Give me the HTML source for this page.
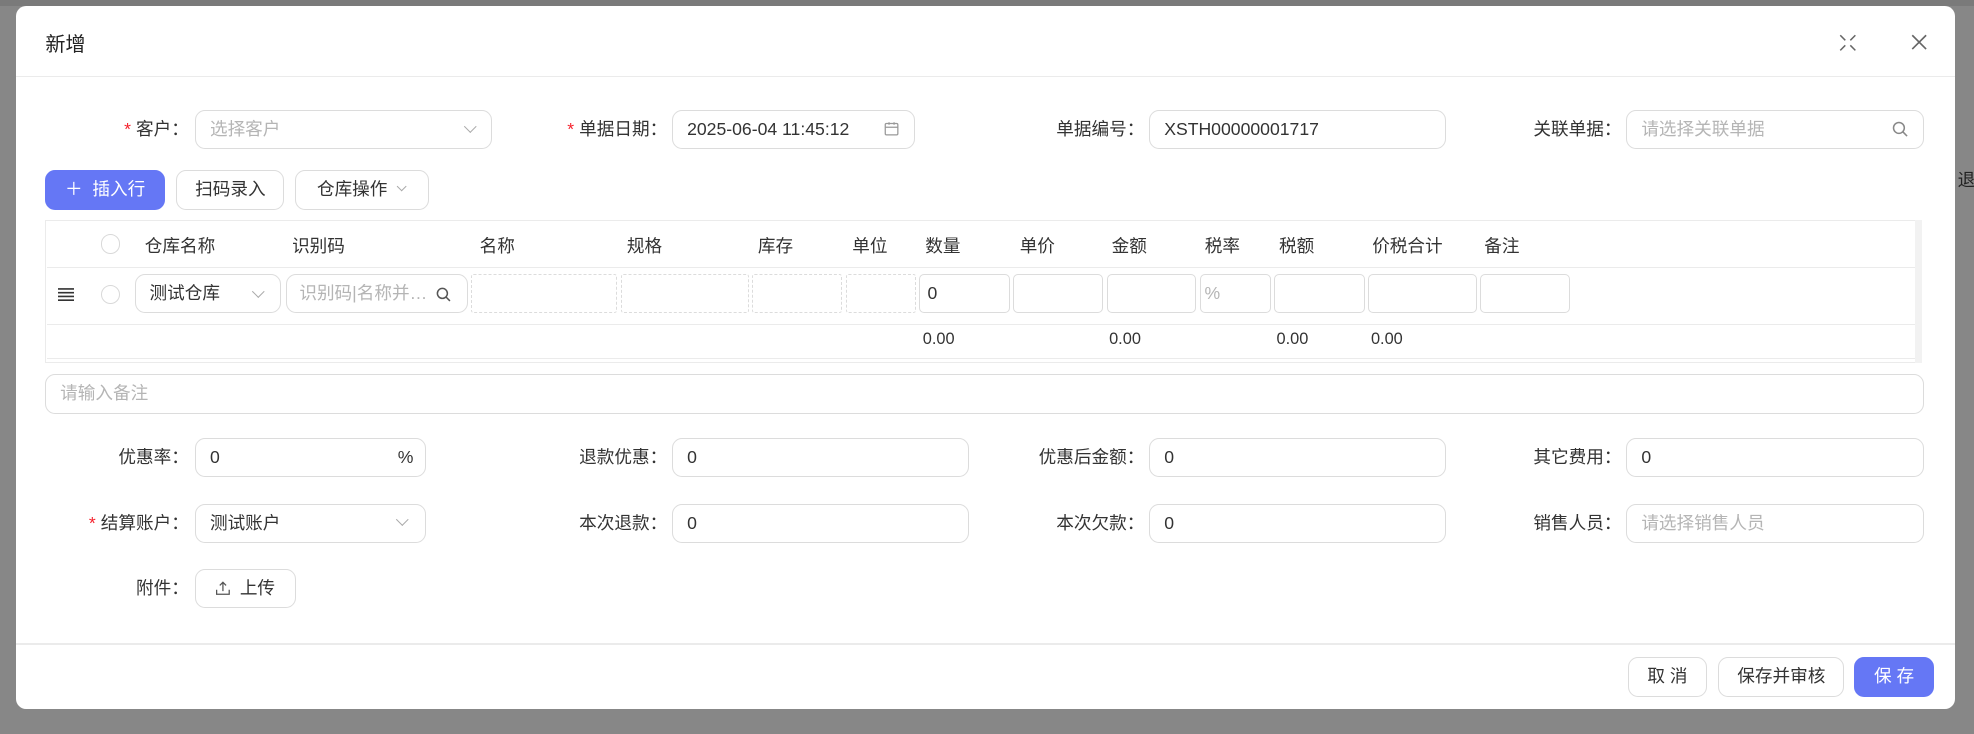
<!DOCTYPE html>
<html><head><meta charset="utf-8"><style>
html{zoom:1.2589}
body{margin:0;width:1568px;height:583px;background:#878787;font-family:"Liberation Sans","Noto Sans CJK SC",sans-serif;font-size:14px;color:#333;position:relative;overflow:hidden}
.a{position:absolute}
.modal{left:13px;top:5px;width:1540px;height:558px;background:#fff;border-radius:8px}
.inp{position:absolute;box-sizing:border-box;border:1px solid #dcdcdc;border-radius:8px;height:31px;line-height:29px;padding-left:11px;background:#fff;font-size:14px}
.ph{color:#b5b5b5}
.lbl{position:absolute;text-align:right;width:140px;line-height:31px;font-size:14px;color:#333}
.req{color:#f5222d;margin-right:4px}
.btn{position:absolute;box-sizing:border-box;border:1px solid #dcdcdc;border-radius:8px;height:32px;line-height:30px;text-align:center;background:#fff;font-size:14px}
.th{position:absolute;top:185px;font-size:14px}
.cell{position:absolute;top:218px;height:31px;box-sizing:border-box;border:1px solid #dcdcdc;border-radius:4px;line-height:29px;padding-left:6px}
.dash{border:1px dashed #dcdcdc;border-radius:2px}
.circ{position:absolute;width:14px;height:14px;border:1px solid #d9d9d9;border-radius:50%}
.chev{position:absolute;width:6px;height:6px;border-right:1px solid #aaa;border-bottom:1px solid #aaa;transform:rotate(45deg)}
.tot{position:absolute;top:262px;font-size:13px}
</style></head><body>
<div class="a" style="left:0;top:0;width:1568px;height:5px;background:#7a7a7a"></div>
<div class="a" style="left:1555px;top:133px;font-size:14px;color:#222">退</div>
<div class="a modal"></div>
<div class="a" style="left:36px;top:22px;font-size:16px;color:#222">新增</div>
<svg class="a" style="left:1461px;top:27px" width="14" height="14" viewBox="0 0 14 14" fill="none" stroke="#666" stroke-width="1.2"><path d="M1 1l4 4M13 1l-4 4M1 13l4-4M13 13l-4-4"/></svg>
<svg class="a" style="left:1518px;top:27px" width="13" height="13" viewBox="0 0 13 13" stroke="#666" stroke-width="1.3"><path d="M1 1l11 11M12 1L1 12"/></svg>
<div class="a" style="left:13px;top:60px;width:1540px;height:1px;background:#ebebeb"></div>

<div class="lbl" style="left:10px;top:87px"><span class="req">*</span>客户：</div>
<div class="inp ph" style="left:155px;top:87px;width:236px">选择客户</div><div class="chev" style="left:370px;top:97px"></div>
<div class="lbl" style="left:390px;top:87px"><span class="req">*</span>单据日期：</div>
<div class="inp" style="left:534px;top:87px;width:193px">2025-06-04 11:45:12</div>
<svg class="a" style="left:702px;top:96px" width="12" height="12" viewBox="0 0 12 12" fill="none" stroke="#999"><rect x="1" y="2" width="10" height="9" rx="1"/><path d="M1 5h10M4 1v2M8 1v2"/></svg>
<div class="lbl" style="left:769px;top:87px">单据编号：</div>
<div class="inp" style="left:913px;top:87px;width:236px">XSTH00000001717</div>
<div class="lbl" style="left:1148px;top:87px">关联单据：</div>
<div class="inp ph" style="left:1292px;top:87px;width:236px">请选择关联单据</div>
<svg class="a" style="left:1503px;top:96px" width="13" height="13" viewBox="0 0 13 13" fill="none" stroke="#888" stroke-width="1.2"><circle cx="5.5" cy="5.5" r="4.3"/><path d="M8.7 8.7l3.3 3.3"/></svg>

<div class="btn" style="left:36px;top:135px;width:95px;background:#6577f5;border-color:#6577f5;color:#fff">＋&nbsp; 插入行</div>
<div class="btn" style="left:140px;top:135px;width:86px">扫码录入</div>
<div class="btn" style="left:234px;top:135px;width:107px;text-align:left;padding-left:17px">仓库操作</div><div class="chev" style="left:316px;top:145px;width:5px;height:5px"></div>

<div class="a" style="left:36px;top:175px;width:1491px;height:113px;border:1px solid #ebebeb;box-sizing:border-box"></div>
<div class="a" style="left:1521px;top:175px;width:6px;height:113px;background:#f2f2f2"></div>
<div class="a" style="left:37px;top:212px;width:1484px;height:1px;background:#ebebeb"></div>
<div class="a" style="left:37px;top:257px;width:1484px;height:1px;background:#ebebeb"></div>
<div class="a" style="left:37px;top:284px;width:1484px;height:1px;background:#ebebeb"></div>
<div class="circ" style="left:80px;top:186px"></div>
<div class="th" style="left:115px">仓库名称</div><div class="th" style="left:232px">识别码</div><div class="th" style="left:381px">名称</div><div class="th" style="left:498px">规格</div><div class="th" style="left:602px">库存</div><div class="th" style="left:677px">单位</div><div class="th" style="left:735px">数量</div><div class="th" style="left:810px">单价</div><div class="th" style="left:883px">金额</div><div class="th" style="left:957px">税率</div><div class="th" style="left:1016px">税额</div><div class="th" style="left:1090px">价税合计</div><div class="th" style="left:1179px">备注</div>

<svg class="a" style="left:46px;top:228px" width="13" height="12" viewBox="0 0 13 12" stroke="#333" stroke-width="1.3"><path d="M0 1.5h13M0 4.5h13M0 7.5h13M0 10.5h13"/></svg>
<div class="circ" style="left:80px;top:226px"></div>
<div class="cell" style="left:107px;width:116px;border-radius:8px;padding-left:11px">测试仓库</div><div class="chev" style="left:202px;top:228px"></div>
<div class="cell ph" style="left:227px;width:145px;border-radius:8px;padding-left:10px">识别码|名称并…</div>
<svg class="a" style="left:346px;top:228px" width="12" height="12" viewBox="0 0 13 13" fill="none" stroke="#555" stroke-width="1.3"><circle cx="5.5" cy="5.5" r="4.3"/><path d="M8.7 8.7l3.3 3.3"/></svg>
<div class="cell dash" style="left:374px;width:116px"></div>
<div class="cell dash" style="left:493px;width:102px"></div>
<div class="cell dash" style="left:597px;width:72px"></div>
<div class="cell dash" style="left:672px;width:56px"></div>
<div class="cell" style="left:730px;width:72px">0</div>
<div class="cell" style="left:805px;width:71px"></div>
<div class="cell" style="left:879px;width:71px"></div>
<div class="cell ph" style="left:953px;width:57px;padding-left:3px">%</div>
<div class="cell" style="left:1012px;width:72px"></div>
<div class="cell" style="left:1087px;width:86px"></div>
<div class="cell" style="left:1176px;width:71px"></div>
<div class="tot" style="left:733px">0.00</div><div class="tot" style="left:881px">0.00</div><div class="tot" style="left:1014px">0.00</div><div class="tot" style="left:1089px">0.00</div>

<div class="inp ph" style="left:36px;top:297px;width:1492px;height:32px;line-height:30px">请输入备注</div>

<div class="lbl" style="left:10px;top:348px">优惠率：</div>
<div class="inp" style="left:155px;top:348px;width:183px">0</div><div class="a" style="left:316px;top:355px">%</div>
<div class="lbl" style="left:390px;top:348px">退款优惠：</div>
<div class="inp" style="left:534px;top:348px;width:236px">0</div>
<div class="lbl" style="left:769px;top:348px">优惠后金额：</div>
<div class="inp" style="left:913px;top:348px;width:236px">0</div>
<div class="lbl" style="left:1148px;top:348px">其它费用：</div>
<div class="inp" style="left:1292px;top:348px;width:236px">0</div>

<div class="lbl" style="left:10px;top:400px"><span class="req">*</span>结算账户：</div>
<div class="inp" style="left:155px;top:400px;width:183px">测试账户</div><div class="chev" style="left:316px;top:409px"></div>
<div class="lbl" style="left:390px;top:400px">本次退款：</div>
<div class="inp" style="left:534px;top:400px;width:236px">0</div>
<div class="lbl" style="left:769px;top:400px">本次欠款：</div>
<div class="inp" style="left:913px;top:400px;width:236px">0</div>
<div class="lbl" style="left:1148px;top:400px">销售人员：</div>
<div class="inp ph" style="left:1292px;top:400px;width:236px">请选择销售人员</div>

<div class="lbl" style="left:10px;top:452px">附件：</div>
<div class="btn" style="left:155px;top:452px;width:80px;height:31px">
<svg style="vertical-align:-1px;margin-right:8px" width="11" height="11" viewBox="0 0 11 11" fill="none" stroke="#555"><path d="M5.5 8V1M3 3.5l2.5-2.5L8 3.5M.5 7v3.5h10V7"/></svg>上传</div>

<div class="a" style="left:13px;top:511px;width:1540px;height:1px;background:#ebebeb"></div>
<div class="btn" style="left:1293px;top:522px;width:63px">取 消</div>
<div class="btn" style="left:1365px;top:522px;width:100px">保存并审核</div>
<div class="btn" style="left:1473px;top:522px;width:63px;background:#6577f5;border-color:#6577f5;color:#fff">保 存</div>
</body></html>
